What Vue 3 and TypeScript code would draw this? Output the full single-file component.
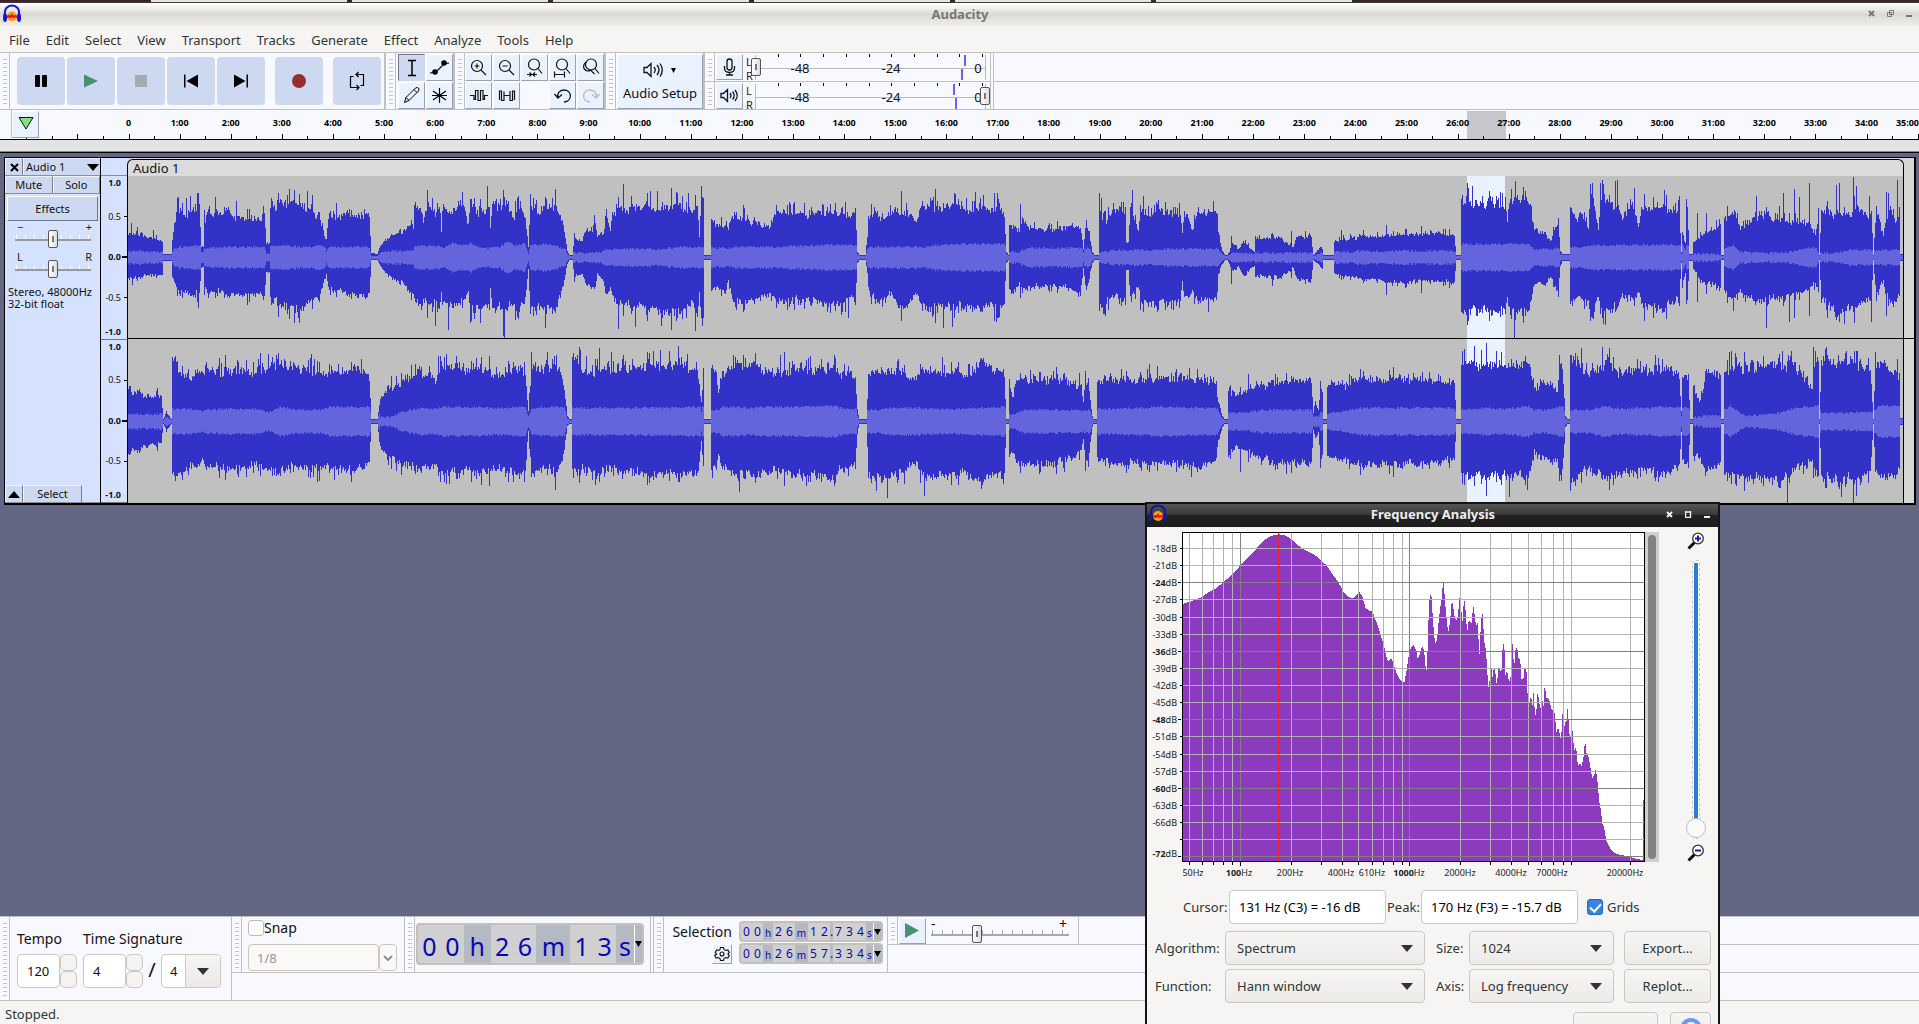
<script setup lang="ts">
import { ref } from 'vue'

interface Column { up: number; down: number; rms: number }

/* Deterministic noise so that every render draws the same waveform. */
function noise(seed: number): () => number {
  let s = seed
  return () => {
    s = (s * 1664525 + 1013904223) % 4294967296
    return s / 4294967296
  }
}

const CLIP_START = 128
const CLIP_WIDTH = 1775

/* Envelope points are "position,up,down[,rms]"; peaks are "position,up,down". */
function buildColumns(envelope: string, peaks: string, seed: number, half: number): Column[] {
  let lastRms = 5
  const points = envelope.trim().split(/\s+/).map((p) => {
    const v = p.split(',').map(Number)
    if (v.length > 3) lastRms = v[3]
    return { x: v[0] - CLIP_START, up: v[1], down: v[2], rms: lastRms }
  })
  const rand = noise(seed)
  const columns: Column[] = []
  let i = 0
  let swell = 0
  for (let x = 0; x < CLIP_WIDTH; x++) {
    while (i < points.length - 2 && points[i + 1].x <= x) i++
    const a = points[i]
    const b = points[i + 1]
    const t = Math.min(1, Math.max(0, (x - a.x) / (b.x - a.x)))
    let up = a.up + (b.up - a.up) * t
    let down = a.down + (b.down - a.down) * t
    const base = Math.min(up, down)
    let rms = a.rms + (b.rms - a.rms) * t
    const r1 = rand()
    const r2 = rand()
    const r3 = rand()
    if (x % 3 === 0) swell = (rand() - 0.5) * 0.12
    if (base > 6) {
      up += up * (swell + (r1 - 0.5) * 0.16 + (r3 > 0.78 ? (r3 - 0.78) * 1.3 : 0))
      down += down * (swell + (r2 - 0.5) * 0.16 + (r3 > 0.82 ? (r3 - 0.82) * 1.4 : 0))
      rms += (r2 - 0.5) * 2.4
    }
    rms = Math.min(rms, base * 0.5)
    columns.push({ up: Math.min(half, up), down: Math.min(half, down), rms })
  }
  for (const p of peaks.trim().split(/\s+/)) {
    const [x, u, d] = p.split(',').map(Number)
    const c = columns[x - CLIP_START]
    if (!c) continue
    if (u) c.up = u
    if (d) c.down = d
  }
  return columns
}

function toPath(columns: Column[], mid: number, kind: 'peak' | 'rms'): string {
  let d = ''
  columns.forEach((c, x) => {
    const u = Math.round(kind === 'peak' ? c.up : c.rms)
    const l = Math.round(kind === 'peak' ? c.down : c.rms)
    d += `M${x} ${mid - u}h1v${u + l + 1}h-1z`
  })
  return d
}

const leftEnvelope = `
128,24,22,6 135,25,20 150,20,17,5 162,15,17 163,3,3 171,3,3 172,16,18,5 174,35,25,8 178,46,33,10 190,42,36,11 199,52,36
201,10,10 203,10,10 204,38,32,9 215,42,33 225,46,36,10 240,36,36 264,42,38 266,14,14,3 269,14,14 270,47,40,11 285,54,46
300,48,50,10 310,48,43 318,42,38,11 325,18,20 326,16,16,6 328,38,30,10 345,42,35 360,42,38 369,42,38 371,4,2,1 377,3,2
380,12,8,4 390,22,20,6 400,25,24 411,30,33 413,30,35 414,56,45,11 421,48,48 423,35,44 427,55,45 440,45,48 441,24,32,9 443,50,44
452,44,46,14 463,56,44,12 468,28,30 470,52,52,14 480,45,50,9 489,48,46 490,28,28 492,50,50,11 500,54,50,10 508,52,50,16 514,38,48,11
520,52,50,13 525,38,42 528,10,10,2 530,55,50,12 538,42,48 545,55,54,13 557,50,48,11 563,30,25,8 567,6,6 569,2,2 572,2,2
574,18,18,4 582,16,16 585,26,25 592,24,28 594,40,32 597,20,16,5 603,24,22 606,45,38,8 610,26,30 612,44,42,8 630,50,48 645,50,48
660,46,52 680,52,54,10 692,42,45 697,52,60 699,22,36 702,56,60 703,50,54 704,2,2 710,2,2 711,35,30,9 725,28,32 728,30,22,8 732,42,44,10
745,38,44 755,34,40 770,30,36 775,42,40,9 790,44,42,11 810,42,42 820,46,44,12 840,42,46 850,38,36 855,46,46 857,5,5 859,2,2 865,2,2
867,20,15 868,38,30,10 875,44,44 885,36,42 890,44,32 902,46,54 915,38,35 925,50,50 940,50,48,12 958,54,50,13 965,46,46 975,50,50
990,48,48 1000,48,50 1004,40,42 1006,5,5 1008,2,2 1009,30,32,5 1016,28,32 1018,22,24 1022,38,32,7 1030,28,28,9 1050,27,28 1070,31,30
1080,29,36 1083,8,10 1085,26,28 1088,28,25 1092,5,5 1094,2,2 1098,2,2 1099,60,50,5 1101,42,48 1106,35,45 1112,52,40,7 1120,45,40
1125,44,42 1126,14,12 1128,14,12 1130,48,40 1138,28,28 1141,48,44 1150,38,44 1160,48,45,8 1172,40,42 1180,46,44 1182,22,22 1184,45,40 1192,28,34
1197,45,42 1216,44,38 1218,22,15 1222,6,6 1225,2,2 1227,2,2 1229,5,6,2 1232,14,13,4 1238,8,8 1243,16,18 1247,12,14 1254,5,8
1255,20,18 1280,19,20 1293,8,8 1296,20,20 1311,20,22 1313,2,2 1320,10,8 1322,8,10 1323,2,2 1333,2,2 1334,15,15,5 1345,18,18
1360,20,20,6 1385,22,25,6 1410,23,24 1440,23,22 1454,21,25 1456,2,2 1460,2,2 1461,58,55,13 1475,53,52 1490,56,54 1505,50,50
1507,40,42 1510,58,54 1528,56,52 1534,28,26,8 1545,22,25 1550,15,18 1558,34,34,9 1560,6,8 1562,3,3 1569,3,3 1570,46,44,10 1577,36,40
1581,48,44 1588,30,40 1590,60,55,12 1593,60,60 1598,30,38 1600,58,50 1612,54,54 1622,40,38 1632,54,42 1638,30,34 1642,50,50
1660,52,52 1675,48,44 1679,50,40 1681,5,5 1682,28,30 1685,14,15 1687,48,40 1689,3,3 1692,3,3 1693,15,10,3 1700,20,22 1710,24,24
1720,32,32 1721,2,2 1723,2,2 1724,40,34,8 1733,44,40,12 1740,30,34,5 1760,40,42,4 1775,40,40 1790,34,36,5 1810,34,30,9 1815,20,24
1818,40,30,5 1819,2,2 1821,48,42,4 1835,42,56 1850,44,52,7 1860,50,48 1868,38,40 1871,40,40 1873,2,2 1876,48,40,7 1883,22,22
1890,48,45 1896,32,40 1899,44,36 1900,3,3 1903,3,3`
const leftPeaks = `
131,34,20 132,22,27 153,27,18 178,60,32 186,59,35 190,61,38 198,64,50 215,60,40 236,56,36 298,52,60 307,66,46 427,67,60 435,40,68
448,44,72 462,65,50 470,58,65 487,71,50 503,67,78 504,60,80 515,56,62 545,60,70 555,68,55 618,60,71 623,73,58 635,46,69 650,66,50
657,66,52 661,50,68 671,69,72 677,64,60 688,64,48 695,62,73 701,71,60 702,60,68 743,52,54 848,40,60 901,66,63 906,54,48 943,54,70
952,54,69 975,65,50 983,62,48 996,50,64 997,64,60 1020,53,40 1099,64,53 1101,59,50 1103,44,56 1105,46,58 1132,67,36 1140,52,52
1154,52,50 1179,54,50 1208,48,54 1231,21,26 1272,24,28 1291,26,20 1341,27,22 1386,32,37 1421,31,35 1472,71,50 1514,60,81 1515,76,62
1525,66,58 1592,74,60 1600,74,56 1602,77,60 1605,54,67 1615,76,54 1617,77,50 1634,69,48 1664,67,54 1686,58,46 1697,44,44 1706,44,36
1733,42,53 1756,61,44 1766,50,70 1783,64,48 1789,44,64 1794,68,60 1799,60,42 1809,74,58 1836,72,62 1839,74,64 1853,80,54 1856,71,50
1869,61,42 1871,46,64 1886,65,58 1888,64,48 1897,77,40`

const rightEnvelope = `
128,30,30,7 145,26,26 161,24,20 163,2,2 166,9,8 168,6,6 171,2,2 172,60,50,12 180,46,50 190,42,44 200,50,40,10 220,50,46,12 245,48,45
260,52,44 265,50,45,9 270,54,46 280,56,48,14 300,52,44,11 320,46,46 330,50,46,14 350,50,48 365,52,46 369,40,38 371,2,2 377,2,2
380,24,28,4 390,32,35 400,38,42,9 420,50,46,13 435,42,42,12 440,54,50,14 475,52,50,14 500,47,48,13 520,50,50,14 525,44,46 528,10,10,5
531,52,50,12 545,54,48,14 557,54,48 563,38,35 567,5,4 569,2,2 571,2,2 572,60,44,13 590,48,50 610,52,48 650,54,52,13 670,56,50,13
690,52,50,14 698,48,50 701,18,18 703,50,46 704,2,2 710,2,2 711,50,48,11 716,46,44 718,26,30 722,48,46,14 735,56,52 750,56,54,13
770,48,48,14 790,52,52 820,52,54,15 835,54,54 842,46,44,12 855,46,44 857,10,10 859,2,2 866,2,2 868,44,52,11 880,50,56 892,52,54,13
905,46,46 915,44,44 925,50,52,12 945,48,54 960,48,50 972,50,56,13 981,56,58 990,52,54,14 1004,44,52 1006,2,2 1008,2,2 1009,38,34,7
1012,22,30 1016,42,42,8 1025,40,42,11 1060,42,40 1074,38,36 1080,34,28 1083,20,18 1085,38,40 1088,36,38 1092,5,5 1093,2,2 1096,2,2
1097,38,36,12 1110,42,42,12 1140,40,42,13 1160,44,40,14 1200,42,44,13 1215,40,38 1218,20,20 1222,5,5 1224,2,2 1227,2,2 1228,30,32,8
1235,26,24 1245,30,28 1260,34,36,11 1290,40,42 1311,40,40 1313,8,8,4 1315,20,16 1318,10,10 1320,36,38,8 1322,30,34 1323,2,2 1326,2,2
1327,38,34,7 1345,36,38,10 1360,40,42,13 1400,42,42 1454,38,38,13 1456,2,2 1460,2,2 1461,58,56,12 1475,56,52 1490,56,54,13
1505,54,52,12 1528,60,55,15 1534,32,30,11 1545,38,36 1557,32,40,13 1559,62,58,15 1562,48,50 1565,5,5 1567,2,2 1569,2,2 1570,62,62,11
1580,56,50 1588,44,46 1605,58,56,15 1620,48,52,12 1640,50,46,13 1660,52,52,14 1679,46,44 1681,10,10 1682,46,42 1688,40,42 1690,2,2
1692,2,2 1693,32,34,4 1700,20,36 1706,48,46,5 1720,48,44 1721,2,2 1723,2,2 1724,48,50,11 1730,52,50,15 1745,54,56,5 1780,56,58,8
1795,54,46,13 1805,40,42,14 1812,34,40 1814,60,50,15 1818,58,50 1819,2,2 1821,58,52,8 1840,56,58 1850,62,56,8 1860,54,58,9 1870,52,48
1873,2,2 1875,54,44,11 1880,54,50,15 1890,50,54,15 1899,44,48 1900,3,3 1903,3,3`
const rightPeaks = `
172,64,52 177,60,54 268,67,48 276,66,54 311,67,50 314,62,44 334,50,58 361,62,46 411,56,48 449,56,62 471,60,60 531,69,55 555,56,68
556,66,50 573,68,56 599,73,60 611,69,50 623,66,52 653,70,58 660,71,50 678,75,60 687,67,50 733,66,52 739,58,70 743,66,56 780,66,52
810,65,60 876,50,69 887,52,76 924,48,74 942,64,52 981,63,67 991,56,56 1030,51,44 1064,48,50 1121,52,44 1191,42,55 1240,34,50 1248,47,40
1320,40,46 1408,47,42 1462,70,62 1481,71,62 1509,54,75 1527,58,68 1570,66,69 1575,68,64 1602,74,58 1608,64,54 1729,69,56 1782,70,58
1787,60,82 1791,70,52 1813,74,56 1815,70,54 1827,66,50 1841,60,75 1846,70,62 1853,58,82 1857,70,56 1875,69,50 1897,62,52`

const leftColumns = buildColumns(leftEnvelope, leftPeaks, 11, 81)
const rightColumns = buildColumns(rightEnvelope, rightPeaks, 57, 82)
const LEFT_MID = 81
const RIGHT_MID = 245
const wavePeak = toPath(leftColumns, LEFT_MID, 'peak') + toPath(rightColumns, RIGHT_MID, 'peak')
const waveRms = toPath(leftColumns, LEFT_MID, 'rms') + toPath(rightColumns, RIGHT_MID, 'rms')

const menus = ['File', 'Edit', 'Select', 'View', 'Transport', 'Tracks', 'Generate', 'Effect', 'Analyze', 'Tools', 'Help']

/* Timeline: positions are shares of the ruler's width. */
const share = (x: number): string => `${(x / 1919) * 100}%`
const MINUTE = 51.12
const minorTicks = Array.from({ length: 75 }, (_, i) => i - 4).map((n) => ({
  x: share(Math.round(128.5 + (n * MINUTE) / 2)),
  major: n % 2 === 0 && n > -4,
}))
const minutes = Array.from({ length: 35 }, (_, i) => ({ text: i === 0 ? '0' : `${i}:00`, x: share(128.5 + i * MINUTE) }))

const scaleLabels = [
  { text: '1.0', bold: true }, { text: '0.5', bold: false }, { text: '0.0', bold: true },
  { text: '-0.5', bold: false }, { text: '-1.0', bold: true },
]

/* Spectrum plot */
const freqX = (f: number): number => Math.round(262.3 + 169.7 * Math.log10(f / 1000)) + 0.5
const grid = [50, 60, 70, 80, 90, 100, 200, 300, 400, 500, 600, 700, 800, 900, 1000, 2000, 3000, 4000, 5000, 6000, 7000, 8000, 9000, 20000]
  .map((f) => ({ x: f === 9000 ? 424.5 : freqX(f), major: f === 100 || f === 1000 }))
const levels = Array.from({ length: 19 }, (_, i) => ({
  y: Math.round(16.1 + i * 17.12) + 0.5,
  value: `-${18 + i * 3}`,
  major: (18 + i * 3) % 12 === 0,
  label: i !== 17,
}))
const freqLabels = [
  { n: '50', x: 46 }, { n: '100', x: 92, bold: true }, { n: '200', x: 143 }, { n: '400', x: 194 }, { n: '610', x: 225 },
  { n: '1000', x: 262, bold: true }, { n: '2000', x: 313 }, { n: '4000', x: 364 }, { n: '7000', x: 405 }, { n: '20000', x: 478 },
]
const spectrum = `112,1099 112,326 130,320 150,312 163,305 180,292 200,280 219,262 240,242 264,213 285,188 305,165 320,145 335,130 350,121
368,117 385,120 400,130 415,145 430,160 450,170 465,180 479,193 495,210 510,235 525,258 540,288 550,302 558,307 568,307 575,298 583,290
590,302 600,340 610,346 618,350 628,380 640,420 650,460 656,490 660,498 668,490 674,505 682,535 690,552 698,563 703,560 708,530 713,490
718,464 724,452 728,450 734,465 738,490 743,480 748,457 753,455 757,485 760,524 763,524 766,400 769,320 772,300 775,305 779,380 783,430
786,445 790,430 794,380 798,340 803,300 806,249 810,300 814,360 818,400 821,410 825,370 829,315 832,330 836,360 840,375 844,370 848,330
850,304 853,320 857,385 861,320 864,315 867,370 870,412 874,375 878,380 882,385 886,327 890,360 894,395 897,375 900,430 903,480 907,370
911,357 914,410 917,455 920,460 923,525 927,577 931,545 934,508 937,550 941,517 945,530 949,572 953,520 957,520 961,535 965,445 969,450
972,540 976,525 980,550 984,562 987,530 989,417 992,465 995,520 999,460 1003,455 1007,490 1011,490 1015,555 1020,550 1024,510 1028,530
1031,600 1035,628 1040,600 1044,630 1047,590 1051,668 1055,640 1058,585 1062,625 1066,640 1069,603 1073,640 1077,558 1080,610 1086,610
1090,620 1094,640 1100,650 1104,655 1107,715 1112,695 1116,715 1120,735 1124,655 1128,700 1132,680 1135,678 1138,630 1142,715 1146,725
1149,678 1152,735 1156,765 1160,755 1165,812 1170,805 1175,812 1180,785 1184,735 1188,775 1193,785 1198,815 1203,850 1208,840 1213,822
1218,870 1222,920 1226,945 1230,985 1235,1000 1240,1035 1248,1055 1256,1068 1264,1075 1280,1080 1300,1084 1315,1090 1338,1095 1338,915
1341,915 1341,1099`

interface Cell { text: string; kind: 'digit' | 'unit' | 'point' }
function timeCells(value: string): Cell[] {
  return value.split('').map((c) => ({ text: c, kind: /\d/.test(c) ? 'digit' : c === '.' ? 'point' : 'unit' }))
}
const position = timeCells('00h26m13s')
const selectionTimes = [
  { name: 'Selection start', cells: timeCells('00h26m12.734s') },
  { name: 'Selection end', cells: timeCells('00h26m57.334s') },
]

const meterTicks = [23, 45, 68, 91, 114, 136, 159, 182, 204, 227]
const meters = [
  { name: 'Recording level', marks: [{ x: 209, top: true }, { x: 206, top: false }], value: 0 },
  { name: 'Playback level', marks: [{ x: 198, top: true }, { x: 200, top: false }], value: 100 },
]

const tempo = ref('120')
const upper = ref('4')
const lower = ref('4')
const snap = ref(false)
const grids = ref(true)
const cursorText = ref('131 Hz (C3) = -16 dB')
const peakText = ref('170 Hz (F3) = -15.7 dB')
</script>

<template>
  <div class="app">
    <div class="desktop-tabs"><span v-for="n in 6" :key="n"></span></div>

    <header class="titlebar">
      <svg class="logo" width="20" height="20" viewBox="0 0 20 20">
        <path d="M3 12C2 4 6 1.500 10 1.500S18 4 17 12" fill="none" stroke="#1414d8" stroke-width="2" />
        <circle cx="10" cy="12.500" r="5" fill="#f5a11c" />
        <path d="M5 13l2-1 1 1 2-2 1 2 2-1 2 1" stroke="#f01010" stroke-width="2" fill="none" />
        <ellipse cx="3" cy="13.500" rx="2" ry="4.500" fill="#1414d8" /><ellipse cx="17" cy="13.500" rx="2" ry="4.500" fill="#1414d8" />
      </svg>
      <h1>Audacity</h1>
      <div class="window-buttons">
        <button aria-label="Close"><svg width="7" height="7"><path d="M1 1l5 5M6 1l-5 5" stroke="#77777a" stroke-width="2" /></svg></button>
        <button aria-label="Restore"><svg width="7" height="7"><path d="M2.500 0.500h4v4h-4zM0.500 2.500h4v4h-4z" fill="none" stroke="#77777a" /></svg></button>
        <button aria-label="Minimize"><svg width="7" height="7"><path d="M0 6h6" stroke="#77777a" stroke-width="2" /></svg></button>
      </div>
    </header>

    <nav class="menubar"><button v-for="m in menus" :key="m">{{ m }}</button></nav>

    <div class="toolbars">
      <div class="group">
        <i class="grip"></i>
        <div class="transport">
          <button aria-label="Pause"><svg width="48" height="48"><rect x="18" y="18" width="5" height="12" rx="1" /><rect x="25" y="18" width="5" height="12" rx="1" /></svg></button>
          <button aria-label="Play"><svg width="48" height="48"><path d="M17 17.500v13l14-6.500z" fill="#4a8f70" /></svg></button>
          <button aria-label="Stop"><svg width="48" height="48"><rect x="18" y="18" width="12" height="12" fill="#a5a9b1" /></svg></button>
          <button aria-label="Skip to start"><svg width="48" height="48"><path d="M17 17.500h1.500v13H17zM31 17.500v13L19.500 24z" /></svg></button>
          <button aria-label="Skip to end"><svg width="48" height="48"><path d="M29.500 17.500H31v13h-1.500zM17 17.500v13L28.500 24z" /></svg></button>
          <button aria-label="Record" class="apart"><svg width="48" height="48"><circle cx="24" cy="24" r="7" fill="#962e2e" /></svg></button>
          <button aria-label="Loop" class="apart"><svg width="48" height="48" fill="none" stroke="#000" stroke-width="1.200"><path d="M20.500 19.500h-3v11H26M27.500 28.500h3v-11H23M25.500 15L23 17.500l2.500 2.500M23.500 28l2.500 2.500-2.500 2.500" /></svg></button>
        </div>
      </div>
      <div class="group">
        <i class="grip"></i>
        <div class="tools two">
          <button class="pressed" aria-label="Selection tool"><svg width="27" height="27"><path d="M10 6.500h8M14 6.500v15M10 21.500h8" fill="none" stroke="#000" stroke-width="1.500" /></svg></button>
          <button aria-label="Envelope tool"><svg width="27" height="27"><path d="M4 19l6-1 8-8 5-1" fill="none" stroke="#000" stroke-width="1.200" /><circle cx="9" cy="18" r="2.800" /><circle cx="18" cy="9" r="2.800" /></svg></button>
          <button aria-label="Draw tool"><svg width="27" height="27" fill="none" stroke="#000"><path d="M6.500 20.500l1.500-5L17.500 6q2-1 3 0t0 3L11 18.500zM8 15.500l3 3M16 7.500l3 3" /></svg></button>
          <button aria-label="Multi-tool"><svg width="27" height="27"><path d="M13.500 6v15M7 9l13 9M20 9L7 18M6 13.500h15" stroke="#000" stroke-width="1.200" /></svg></button>
        </div>
      </div>
      <div class="group">
        <i class="grip"></i>
        <div class="tools five">
          <button aria-label="Zoom in"><svg width="27" height="27" fill="none" stroke="#111" stroke-width="1.200"><circle cx="12" cy="12" r="5.500" /><path d="M16 16l5 5M9.500 12h5M12 9.500v5" /></svg></button>
          <button aria-label="Zoom out"><svg width="27" height="27" fill="none" stroke="#111" stroke-width="1.200"><circle cx="12" cy="12" r="5.500" /><path d="M16 16l5 5M9.500 12h5" /></svg></button>
          <button aria-label="Fit selection"><svg width="27" height="27" fill="none" stroke="#111" stroke-width="1.200"><circle cx="13" cy="10.500" r="5.500" /><path d="M17 14.500l4 5M6 20.500h10M8.500 18.500l2 2-2 2M14 18.500l-2 2 2 2" /></svg></button>
          <button aria-label="Fit project"><svg width="27" height="27" fill="none" stroke="#111" stroke-width="1.200"><circle cx="13" cy="10.500" r="5.500" /><path d="M17 14.500l4 5M5.500 20.500h10M5.500 17.500v6M15.500 17.500v6" /></svg></button>
          <button aria-label="Zoom toggle"><svg width="27" height="27" fill="none" stroke="#111" stroke-width="1.200"><circle cx="14" cy="10.500" r="5.500" /><path d="M18 14.500l4 5M9.500 8c-4 2-4 8 1 9q2 0 3-1l4 4" /></svg></button>
          <button aria-label="Trim outside"><svg width="27" height="27" fill="none" stroke="#111" stroke-width="1.200"><path d="M5 13.500h4v4h1.500v-9h2.500v10h2.500v-10H18v9h1.500v-4H23" /></svg></button>
          <button aria-label="Silence"><svg width="27" height="27" fill="none" stroke="#111" stroke-width="1.200"><path d="M6.500 18v-9h2v9.500h2.500v-9M11 13.500h6M17 9v9.500h2.500V9h2v9" /></svg></button>
          <span></span>
          <button aria-label="Undo"><svg width="27" height="27" fill="none" stroke="#111" stroke-width="1.300"><path d="M15 20c9-1 8-12 0-12-5 0-7 4-6 7M5.500 12l3.500 4 4-3.500" /></svg></button>
          <button aria-label="Redo"><svg width="27" height="27" fill="none" stroke="#b6bac2" stroke-width="1.300"><path d="M13 20C4 19 5 8 13 8c5 0 7 4 6 7M22.500 12L19 16l-4-3.500" /></svg></button>
        </div>
      </div>
      <div class="group">
        <i class="grip"></i>
        <button class="audio-setup">
          <svg width="40" height="20" fill="none" stroke="#111" stroke-width="1.300"><path d="M4 7.500h3l4-4v13l-4-4H4zM14 7q2.500 3 0 6M17 5q4 5 0 10M20 3.500q4.500 6.500 0 13" /><path d="M31 8h5l-2.500 5z" fill="#000" stroke="none" /></svg>
          Audio Setup
        </button>
      </div>
      <div class="group meters">
        <div v-for="(m, i) in meters" :key="m.name" class="meter-row">
          <i class="grip"></i>
          <button class="tile" :aria-label="m.name">
            <svg v-if="i === 0" width="27" height="26" fill="none" stroke="#111" stroke-width="1.300"><rect x="11" y="5" width="5" height="11" rx="2.500" /><path d="M8.500 12v2q0 4.500 5 4.500t5-4.500v-2M13.500 19v2M10 21h7" /></svg>
            <svg v-else width="27" height="26" fill="none" stroke="#111" stroke-width="1.300"><path d="M5 10.500h2.500l4-4v12l-4-4H5zM14 10q2 2.500 0 5M16.500 8.500q3.500 4 0 8M19 7q4.500 5.500 0 11" /></svg>
          </button>
          <span class="lr"><b>L</b><b>R</b></span>
          <div class="meter">
            <svg width="235" height="27" shape-rendering="crispEdges">
              <path d="M0 14.500h231M0.500 1v25M230.500 1v25" stroke="#b9b9b9" fill="none" />
              <path v-for="t in meterTicks" :key="t" :d="`M${t}.5 0v3`" stroke="#000" />
              <rect v-for="k in m.marks" :key="k.x" :x="k.x" :y="k.top ? 1 : 15" width="2" height="11" fill="#6464f5" />
            </svg>
            <span class="db a">-48</span><span class="db b">-24</span><span class="db c">0</span>
            <input type="range" class="knob" :value="m.value" :aria-label="m.name" />
          </div>
        </div>
      </div>
      <div class="filler"></div>
    </div>

    <div class="timeline">
      <svg width="100%" height="30" shape-rendering="crispEdges">
        <rect :x="share(1467)" y="1" :width="share(39)" height="28" fill="#c6c7cc" />
        <path d="M11.500 0v28" stroke="#c0c0c0" />
        <svg v-for="t in minorTicks" :key="t.x" :x="t.x" width="1" height="30"><rect width="1" height="30" :y="t.major ? 24 : 26" /></svg>
        <rect x="0" y="29" width="100%" height="1" />
        <text v-for="m in minutes" :key="m.text" :x="m.x" y="16" text-anchor="middle">{{ m.text }}</text>
        <text x="100%" y="16" text-anchor="end">35:00</text>
      </svg>
      <button class="pin" aria-label="Timeline options"><svg width="27" height="27"><path d="M7 6.500h14L14 18z" fill="#7fe37f" stroke="#111" /></svg></button>
    </div>
    <div class="scrub"></div>

    <main class="workspace">
      <section class="track">
        <div class="panel">
          <div class="row"><button class="close" aria-label="Close track"><svg width="9" height="9"><path d="M1 1l7 7M8 1L1 8" stroke="#000" stroke-width="2" /></svg></button><button class="name">Audio 1<svg width="12" height="7"><path d="M0 0h12L6 7z" /></svg></button></div>
          <div class="row halves"><button>Mute</button><button>Solo</button></div>
          <button class="effects">Effects</button>
          <label class="dial"><span>−</span><span>+</span><input type="range" aria-label="Gain" /></label>
          <label class="dial"><span>L</span><span>R</span><input type="range" aria-label="Pan" /></label>
          <p>Stereo, 48000Hz<br />32-bit float</p>
          <div class="row foot"><button class="close" aria-label="Collapse"><svg width="12" height="7"><path d="M0 7h12L6 0z" /></svg></button><button class="select">Select</button></div>
        </div>
        <div class="scale">
          <div class="cap"></div>
          <ul v-for="c in 2" :key="c"><li v-for="s in scaleLabels" :key="s.text" :class="{ bold: s.bold }">{{ s.text }}</li></ul>
        </div>
        <div class="clip">
          <div class="clip-title">Audio 1</div>
          <svg :viewBox="`0 0 ${CLIP_WIDTH} 327`" preserveAspectRatio="none" shape-rendering="crispEdges" role="img" aria-label="Waveform">
            <rect width="1775" height="327" fill="#c0c0c0" />
            <rect x="1339" width="38" height="327" fill="#e9f2ff" />
            <path :d="wavePeak" fill="#3232c8" />
            <path :d="waveRms" fill="#6464dc" />
            <rect y="162" width="1775" height="1" />
          </svg>
        </div>
        <div class="tail"></div>
      </section>
    </main>

    <footer class="bottom">
      <div class="cell tempo">
        <i class="grip"></i>
        <div class="tempo-body">
          <div class="field">
            <label for="tempo">Tempo</label>
            <div class="spin"><input id="tempo" v-model="tempo" /><span><button aria-label="Faster"></button><button aria-label="Slower"></button></span></div>
          </div>
          <div class="field">
            <label for="upper">Time Signature</label>
            <div class="spin">
              <input id="upper" v-model="upper" /><span><button aria-label="More beats"></button><button aria-label="Fewer beats"></button></span>
              <em>/</em>
              <div class="beat"><input v-model="lower" aria-label="Beat unit" /><button aria-label="Choose beat unit"><svg width="12" height="7"><path d="M0 0h12L6 7z" fill="#2e3436" /></svg></button></div>
            </div>
          </div>
        </div>
      </div>
      <div class="rest">
        <div class="strip">
          <div class="cell">
            <i class="grip"></i>
            <div class="snap">
              <label><input v-model="snap" type="checkbox" />Snap</label>
              <div class="snap-combo"><select disabled aria-label="Snap to"><option>1/8</option></select><span><svg width="10" height="6"><path d="M1 1l4 4 4-4" fill="none" stroke="#8b8e8f" stroke-width="2" /></svg></span></div>
            </div>
          </div>
          <div class="cell">
            <i class="grip"></i>
            <div class="clock-wrap">
              <div class="clock big"><span v-for="(c, i) in position" :key="i" :class="[c.kind, { m: c.text === 'm', s: c.text === 's' }]">{{ c.text }}</span><button aria-label="Time format"><svg width="7" height="6"><path d="M0 0h7L3.500 6z" /></svg></button></div>
            </div>
          </div>
          <div class="cell gap">
            <i class="grip"></i>
            <div class="selection">
              <div class="sel-left"><span>Selection</span><button class="gear" aria-label="Selection settings"><svg width="20" height="20" fill="none" stroke="#111" stroke-width="1.100"><path d="M8.500 3.500h3l.5 2 1.800 1 2-.6 1.500 2.600-1.400 1.500 1.400 1.500-1.500 2.600-2-.6-1.800 1-.5 2h-3l-.5-2-1.800-1-2 .6-1.500-2.600L4.600 10 3.200 8.500 4.700 5.900l2 .6 1.300-1z" /><circle cx="10" cy="10" r="2" /></svg></button></div>
              <div class="sel-right">
                <div v-for="t in selectionTimes" :key="t.name" class="clock small" :aria-label="t.name"><span v-for="(c, i) in t.cells" :key="i" :class="[c.kind, { m: c.text === 'm', s: c.text === 's' }]">{{ c.text }}</span><button aria-label="Time format"><svg width="7" height="6"><path d="M0 0h7L3.500 6z" /></svg></button></div>
              </div>
            </div>
          </div>
          <div class="speed-rows">
            <div class="speed">
              <i class="grip"></i>
              <button class="tile" aria-label="Play at speed"><svg width="27" height="26"><path d="M6 5v15l14-7.500z" fill="#4a8f70" /></svg></button>
              <label class="speed-range"><span>-</span><span>+</span><input type="range" value="33" aria-label="Playback speed" /></label>
            </div>
          </div>
        </div>
        <div class="strip-low"></div>
      </div>
    </footer>
    <div class="status">Stopped.</div>

    <section class="dialog" role="dialog" aria-labelledby="dialog-title">
      <div class="dialog-title">
        <svg class="logo" width="20" height="20" viewBox="0 0 20 20">
          <path d="M3 12C2 4 6 1.500 10 1.500S18 4 17 12" fill="none" stroke="#1414a8" stroke-width="2" />
          <circle cx="10" cy="12" r="5" fill="#f5a11c" />
          <path d="M5 13l2-1 1 1 2-2 1 2 2-1 2 1" stroke="#f01010" stroke-width="2" fill="none" />
          <ellipse cx="3" cy="13.500" rx="2" ry="3.500" fill="#1414a8" /><ellipse cx="17" cy="13.500" rx="2" ry="3.500" fill="#1414a8" />
        </svg>
        <h2 id="dialog-title">Frequency Analysis</h2>
        <div class="window-buttons">
          <button aria-label="Close"><svg width="7" height="7"><path d="M1 1l5 5M6 1l-5 5" stroke="#eee" stroke-width="2" /></svg></button>
          <button aria-label="Maximize"><svg width="7" height="7"><path d="M0 1h6M0.500 0v6.500h5V0" fill="none" stroke="#eee" stroke-width="1.400" /></svg></button>
          <button aria-label="Minimize"><svg width="7" height="7"><path d="M0 6h6" stroke="#eee" stroke-width="2" /></svg></button>
        </div>
      </div>
      <div class="plot-row">
        <svg class="plot" width="498" height="350">
          <g shape-rendering="crispEdges">
            <rect x="35" y="0" width="463" height="330" fill="#000" />
            <rect x="36" y="1" width="461" height="328" fill="#fff" />
            <svg x="36" y="1" width="461" height="328" viewBox="113 113 1228 985" preserveAspectRatio="none"><polygon :points="spectrum" fill="#8c3abe" /></svg>
            <path v-for="g in grid" :key="g.x" :d="`M${g.x} 1v328`" :stroke="g.major ? '#7f7f7f' : '#b2b2b2'" />
            <path v-for="l in levels" :key="l.y" :d="`M36 ${l.y}h461`" :stroke="l.major ? '#7f7f7f' : '#b2b2b2'" />
            <path d="M131.500 1v328" stroke="#f0202c" />
            <path v-for="l in levels" :key="`t${l.y}`" :d="`M${l.major ? 31 : 33} ${l.y}h3`" stroke="#000" />
            <path v-for="g in grid" :key="`t${g.x}`" :d="`M${g.x} 330v${g.major ? 4 : 3}`" stroke="#000" />
          </g>
          <template v-for="(l, i) in levels" :key="`l${l.y}`">
            <text v-if="l.label" x="30" :y="i === 18 ? 325 : l.y + 3" text-anchor="end"><tspan :class="{ bold: l.major }">{{ l.value }}</tspan>dB</text>
          </template>
          <text v-for="f in freqLabels" :key="f.n" :x="f.x" y="344" text-anchor="middle"><tspan :class="{ bold: f.bold }">{{ f.n }}</tspan>Hz</text>
        </svg>
        <div class="scroll"><i></i></div>
        <div class="zoomer">
          <svg width="18" height="18"><path d="M1.500 16.500l6-6" stroke="#111" stroke-width="3" /><circle cx="11" cy="6.500" r="5.300" fill="#fff" stroke="#333" stroke-width="1.300" /><path d="M8 6.500h6M11 3.500v6" stroke="#1c1ca8" stroke-width="2" /></svg>
          <input type="range" class="vertical" value="0" aria-label="Vertical zoom" />
          <svg width="18" height="18"><path d="M1.500 16.500l6-6" stroke="#111" stroke-width="3" /><circle cx="11" cy="6.500" r="5.300" fill="#fff" stroke="#333" stroke-width="1.300" /><path d="M8 6.500h6" stroke="#1c1ca8" stroke-width="2" /></svg>
        </div>
      </div>
      <div class="readout">
        <label for="cursor">Cursor:</label><input id="cursor" v-model="cursorText" class="box" readonly />
        <label for="peak">Peak:</label><input id="peak" v-model="peakText" class="box" readonly />
        <label class="grids"><input v-model="grids" type="checkbox" />Grids</label>
      </div>
      <div class="options">
        <label for="algorithm">Algorithm:</label>
        <div class="pick"><select id="algorithm"><option>Spectrum</option></select></div>
        <label for="size">Size:</label>
        <div class="pick"><select id="size"><option>1024</option></select></div>
        <button>Export...</button>
        <label for="function">Function:</label>
        <div class="pick"><select id="function"><option>Hann window</option></select></div>
        <label for="axis">Axis:</label>
        <div class="pick"><select id="axis"><option>Log frequency</option></select></div>
        <button>Replot...</button>
      </div>
      <div class="closing">
        <button aria-label="Close"></button>
        <button class="help" aria-label="Help"><svg width="22" height="22"><circle cx="11" cy="11" r="11" fill="#6b9bf7" /><path d="M7 9q0-4 4-4t4 4q0 2-4 4" fill="none" stroke="#fff" stroke-width="2" /></svg></button>
      </div>
    </section>
  </div>
</template>

<style>
body { margin: 0; overflow: hidden; }
</style>

<style scoped>
* { box-sizing: border-box; }
.app { position: relative; display: flex; flex-direction: column; height: 100vh; overflow: hidden; font: 13px/18px "Noto Sans", sans-serif; color: #111; background: #646784; }
button, input, select { font: inherit; color: inherit; margin: 0; padding: 0; border: 0; background: none; border-radius: 0; outline: none; }
button { display: flex; align-items: center; justify-content: center; }
svg { display: block; flex: none; }
h1, h2, p, ul { margin: 0; padding: 0; font-size: 13px; }

.desktop-tabs { display: flex; gap: 5px; height: 3px; padding-left: 151px; background: #3f2228; border-bottom: 1px solid #3c3c3c; flex: none; }
.desktop-tabs span { width: 196px; background: #e6e6e2; }

.titlebar { display: flex; align-items: center; height: 23px; flex: none; padding: 0 6px 2px 2px; background: linear-gradient(#fff, #d9dad2 50%, #eeeee6); }
.titlebar h1 { flex: 1; text-align: center; color: #777; padding-left: 30px; }
.window-buttons { display: flex; gap: 12px; }
.window-buttons button { width: 7px; height: 12px; }

.menubar { display: flex; gap: 16px; height: 27px; flex: none; padding: 2px 9px 0; background: #f6f5f4; border-bottom: 1px solid #c0c0c0; color: #2e3436; }

.toolbars { display: flex; height: 56px; flex: none; background: #f8f9ff; }
.group { display: flex; border-right: 2px solid #c0c0c0; }
.grip { flex: none; width: 10px; border-right: 1px solid #c0c0c0; background: repeating-linear-gradient(#c4c4c4 0 1px, transparent 1px 4px) 3px 6px / 4px calc(100% - 10px) no-repeat; }
.transport { display: flex; gap: 2px; padding: 4px 3px 4px 7px; }
.transport button { width: 48px; height: 48px; border-radius: 4px; background: #ccd9f0; }
.transport .apart { margin-left: 8px; }
.tools { display: grid; grid-auto-rows: 27px; gap: 1px; padding: 1px 0 0; }
.two { grid-template-columns: 27px 27px; padding-left: 2px; }
.five { grid-template-columns: repeat(5, 27px); }
.tools button, .tile, .audio-setup, .pin, .gear { background: #ebf2ff; border: 1px solid #fff; border-right-color: #9aa0b2; border-bottom-color: #9aa0b2; }
.tools .pressed { background: #ccd9f0; border-color: #71788d #ccd9f0 #ccd9f0 #71788d; }
.audio-setup { width: 86px; margin: 1px 0 0 1px; padding-bottom: 2px; flex-direction: column; gap: 4px; }
.meters { flex-direction: column; width: 289px; padding-right: 2px; border-right-width: 1px; }
.meter-row { display: flex; height: 28px; border-right: 1px solid #c0c0c0; }
.meter-row:first-child { height: 29px; border-bottom: 1px solid #c0c0c0; }
.tile { width: 27px; height: 26px; margin: 1px 0 0 1px; flex: none; }
.lr { display: flex; flex-direction: column; flex: none; width: 12px; padding: 2px 0 0 3px; color: #222; font-size: 11px; line-height: 14px; }
.lr b { font-weight: 400; }
.meter { position: relative; flex: 1; min-width: 0; height: 27px; }
.meter svg { margin-top: 1px; }
.db { position: absolute; top: 6px; width: 40px; text-align: center; }
.a { left: 25px; } .b { left: 116px; } .c { left: 203px; }
.knob { position: absolute; left: -4px; top: 4px; width: 239px; height: 20px; }
.filler { flex: 1; background: linear-gradient(#c0c0c0, #c0c0c0) 0 28px / 100% 1px no-repeat; }

input[type="range"] { appearance: none; background: transparent; }
input[type="range"]::-webkit-slider-thumb { appearance: none; width: 10px; height: 18px; border: 1px solid #555; border-radius: 2px; background: linear-gradient(#777, #777) center / 2px 6px no-repeat, linear-gradient(90deg, #fff, #ddd); }

.timeline { position: relative; height: 31px; flex: none; background: #f8f9ff; border-top: 1px solid #c0c0c0; }
.timeline text { font-size: 9px; font-weight: 700; }
.pin { position: absolute; left: 12px; top: 1px; width: 27px; height: 27px; }
.scrub { height: 13px; flex: none; background: #e3e3e3; border-bottom: 1px solid #000; box-shadow: inset 0 -1px #888; }

.workspace { flex: 1; min-height: 0; padding: 4px 3px 0 4px; }
.track { display: flex; height: 348px; border: 1px solid #000; border-right-width: 2px; border-bottom-width: 2px; background: #d6d6d6; }
.panel { display: flex; flex-direction: column; width: 96px; flex: none; background: #d5e2ff; border-right: 1px solid #000; font-size: 11px; line-height: 12px; }
.row { display: flex; height: 18px; border-bottom: 1px solid #8a8f9c; }
.row button { background: #ccd9f0; border: 1px solid #eef4ff; border-right-color: #777c8a; border-bottom: 0; }
.row .close { width: 18px; flex: none; }
.row .name { flex: 1; justify-content: space-between; padding: 0 1px 0 2px; border-right: 0; }
.halves button { flex: 1; }
.effects { height: 25px; margin: 2px 2px 0; flex: none; background: #ccd9f0; border: 1px solid #fff; border-right-color: #71788d; border-bottom-color: #71788d; }
.dial { position: relative; display: flex; flex-wrap: wrap; justify-content: space-between; height: 30px; margin: 0 6px 0 10px; padding: 0 2px; background: linear-gradient(#999, #999) 0 18px / 76px 2px no-repeat, repeating-linear-gradient(90deg, #fff 0 1px, transparent 1px 9px) 1px 14px / 74px 4px no-repeat; color: #222; }
.dial span { height: 12px; }
.dial input { position: absolute; left: 0; top: 8px; width: 76px; height: 20px; }
.panel p { font-size: 11px; padding: 5px 0 0 3px; font-weight: 400; white-space: nowrap; }
.foot { margin-top: auto; }
.foot .select { width: 59px; }
.scale { width: 26px; flex: none; display: flex; flex-direction: column; background: #d5e2ff; font-size: 9px; line-height: 12px; }
.cap { height: 18px; flex: none; border-bottom: 1px solid #8a8f9c; }
.scale ul { list-style: none; flex: 1; display: flex; flex-direction: column; justify-content: space-between; padding: 1px 6px 1px 0; font-size: 9px; text-align: right; border-bottom: 1px solid #777; background: linear-gradient(#000, #000) 100% 50% / 5px 2px no-repeat, linear-gradient(#000, #000) 100% 25% / 3px 1px no-repeat, linear-gradient(#000, #000) 100% 75% / 3px 1px no-repeat; }
.scale li:nth-child(2) { padding-bottom: 7px; }
.scale li:nth-child(4) { padding-top: 7px; }
.scale .bold, .plot .bold { font-weight: 700; }
.clip { flex: 1; min-width: 0; margin-top: 1px; border: 1px solid #000; border-bottom: 0; border-radius: 6px 6px 0 0; overflow: hidden; background: #dbdbdb; }
.clip-title { height: 16px; line-height: 17px; padding-left: 5px; }
.clip svg { width: 100%; height: 327px; }
.tail { width: 10px; flex: none; background: linear-gradient(#000, #000) 0 180px / 100% 1px no-repeat; }

.bottom { display: flex; height: 85px; flex: none; background: #f8f9ff; border-top: 1px solid #c0c0c0; border-bottom: 1px solid #c0c0c0; font-size: 14px; }
.cell { display: flex; border-right: 1px solid #c0c0c0; }
.tempo { width: 232px; flex: none; }
.tempo-body { display: flex; gap: 6px; padding: 13px 0 0 7px; }
.field { display: flex; flex-direction: column; gap: 6px; }
.field label { white-space: nowrap; }
.spin { display: flex; font-size: 13px; }
.spin > input { width: 43px; height: 34px; padding-left: 9px; background: #fff; border: 1px solid #cdc7c2; border-radius: 4px; }
.spin > span { display: flex; flex-direction: column; width: 17px; }
.spin > span button { height: 17px; border: 1px solid #cdc7c2; border-radius: 5px; background: #f4f3f1; }
.spin em { width: 18px; text-align: center; font-style: normal; font-size: 20px; line-height: 32px; }
.beat { display: flex; width: 60px; height: 34px; border: 1px solid #cdc7c2; border-radius: 4px; overflow: hidden; background: #fff; }
.beat input { width: 24px; padding-left: 8px; border-right: 1px solid #cdc7c2; }
.beat button { flex: 1; background: linear-gradient(#f6f5f4, #ebe9e7); }
.rest { flex: 1; display: flex; flex-direction: column; min-width: 0; }
.strip { display: flex; height: 56px; border-bottom: 1px solid #c0c0c0; }
.snap { width: 162px; padding: 2px 0 0 6px; display: flex; flex-direction: column; gap: 7px; }
.snap label { display: flex; align-items: center; height: 18px; }
input[type="checkbox"] { appearance: none; width: 16px; height: 16px; border: 1px solid #c2bcb6; border-radius: 3px; background: #fff; }
.snap-combo { display: flex; font-size: 13px; color: #929595; }
.snap-combo select { appearance: none; width: 131px; height: 27px; padding-left: 8px; border: 1px solid #cdc7c2; border-radius: 4px; background: #faf9f8; color: #929595; opacity: 1; }
.snap-combo span { display: flex; align-items: center; justify-content: center; width: 18px; border: 1px solid #cdc7c2; border-radius: 4px; background: #faf9f8; }
.clock-wrap { padding: 6px 6px 0 1px; }
.clock { display: flex; border: 2px solid #c4c1bd; border-radius: 4px; background: #b4b9c3; color: #0808b4; overflow: hidden; }
.clock span { text-align: center; }
.clock .digit { background: #d0d0d0; }
.clock button { border-left: 1px solid #fff; flex: 1; background: #b4b9c3; color: #000; }
.big { width: 228px; height: 42px; font-size: 25px; line-height: 42px; }
.big .digit { width: 23px; } .big .unit { width: 27px; } .big .m { width: 34px; } .big .s { width: 18px; }
.gap { margin-left: 2px; border-left: 1px solid #c0c0c0; }
.selection { display: flex; gap: 7px; padding: 4px 4px 0 6px; }
.sel-left { display: flex; flex-direction: column; align-items: flex-end; gap: 1px; line-height: 22px; width: 62px; }
.gear { width: 20px; height: 20px; }
.sel-right { display: flex; flex-direction: column; gap: 1px; }
.small { width: 144px; height: 21px; font-size: 12px; line-height: 17px; }
.small .digit { width: 11px; } .small .unit { width: 10px; font-size: 10px; line-height: 20px; } .small .m { width: 13px; } .small .s { width: 7px; } .small .point { width: 3px; }
.speed-rows { flex: 1; }
.speed { display: flex; height: 28px; border-bottom: 1px solid #c0c0c0; }
.speed-range { position: relative; display: flex; justify-content: space-between; width: 153px; padding: 0 11px 0 5px; border-right: 1px solid #c0c0c0; line-height: 14px; background: linear-gradient(#a8a8a8, #a8a8a8) 5px 17px / 138px 2px no-repeat, repeating-linear-gradient(90deg, #a8a8a8 0 1px, transparent 1px 10px) 6px 13px / 137px 4px no-repeat; }
.speed-range input { position: absolute; left: 4px; top: 7px; width: 138px; height: 20px; }
.strip-low { flex: 1; }
.status { height: 23px; flex: none; padding-left: 5px; line-height: 26px; background: #f6f5f4; color: #2e3436; }

.dialog { position: absolute; right: 199px; top: 502px; width: 575px; background: #f6f5f4; border: 2px solid #141414; color: #2e3436; }
.dialog-title { display: flex; align-items: center; height: 23px; padding: 0 7px 3px 1px; color: #eee; background: linear-gradient(#555, #3a3a3a 45%, #222 50%, #1c1c1c); }
.dialog-title h2 { flex: 1; text-align: center; padding-left: 32px; }
.plot-row { display: flex; padding-top: 5px; height: 355px; }
.plot { font-size: 9px; fill: #222; }
.scroll { width: 14px; height: 330px; padding: 3px; background: #cfcfcf; }
.scroll i { display: block; width: 8px; height: 324px; border-radius: 4px; background: #808383; }
.zoomer { flex: 1; display: flex; flex-direction: column; align-items: center; padding-left: 15px; }
.vertical { writing-mode: vertical-lr; direction: rtl; width: 20px; height: 279px; margin: 10px 0 5px; }
.vertical::-webkit-slider-runnable-track { width: 8px; border: 1px dashed #c8c4c0; border-radius: 4px; background: linear-gradient(#2b79d8, #2b79d8) center 2px / 4px calc(100% - 6px) no-repeat, #fff; }
input.vertical::-webkit-slider-thumb { width: 20px; height: 20px; margin-left: -7px; border: 1px solid #c4beb8; border-radius: 50%; background: #fafafa; }
.readout { display: flex; align-items: center; height: 34px; margin-top: 8px; padding-left: 36px; }
.readout .box { width: 157px; height: 34px; padding-left: 9px; background: #fff; border: 1px solid #cdc7c2; border-radius: 4px; color: #000; }
.readout label:first-child { width: 46px; }
.readout label:nth-of-type(2) { width: 35px; padding-left: 1px; }
.readout .grids { display: flex; align-items: center; gap: 4px; margin-left: 9px; }
.grids input { border-color: #1b6acb; background: #3584e4; position: relative; }
.grids input:checked::after { content: ""; position: absolute; left: 4px; top: 1px; width: 5px; height: 9px; border: solid #fff; border-width: 0 2px 2px 0; transform: rotate(42deg); }
.options { display: grid; grid-template-columns: 70px 200px 44px 145px 87px; grid-auto-rows: 34px; row-gap: 4px; align-items: center; margin: 7px 0 0 8px; }
.options label:nth-of-type(2n) { padding-left: 11px; }
.options > button { margin-left: 10px; width: 87px; }
.options > button, .pick select, .closing button { height: 34px; border: 1px solid #cdc7c2; border-radius: 4px; background: linear-gradient(#f6f5f4, #edebe9); }
.pick { position: relative; }
.pick::after { content: ""; position: absolute; right: 12px; top: 14px; border: 6px solid transparent; border-top: 7px solid #2e3436; border-bottom: 0; pointer-events: none; }
.pick select { appearance: none; width: 100%; padding-left: 11px; }
.closing { display: flex; justify-content: flex-end; gap: 12px; margin: 9px 7px 0 0; height: 34px; }
.closing button { width: 85px; }
.closing .help { width: 41px; }
</style>
